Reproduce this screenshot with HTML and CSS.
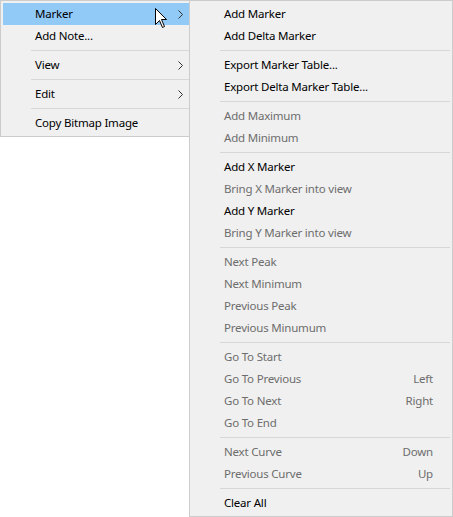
FILE: index.html
```html
<!DOCTYPE html>
<html>
<head>
<meta charset="utf-8">
<link rel="stylesheet" href="styles.css">
</head>
<body>
<div class="stage">
  <div class="menu main">
    <div class="item active"><span class="label">Marker</span><svg class="chev" width="5" height="9" viewBox="0 0 5 9"><polyline points="0.5,0.5 4.5,4.5 0.5,8.5" fill="none" stroke="#333" stroke-width="1"/></svg></div>
    <div class="item"><span class="label">Add Note...</span></div>
    <div class="sep"></div>
    <div class="item"><span class="label">View</span><svg class="chev" width="5" height="9" viewBox="0 0 5 9"><polyline points="0.5,0.5 4.5,4.5 0.5,8.5" fill="none" stroke="#333" stroke-width="1"/></svg></div>
    <div class="sep"></div>
    <div class="item"><span class="label">Edit</span><svg class="chev" width="5" height="9" viewBox="0 0 5 9"><polyline points="0.5,0.5 4.5,4.5 0.5,8.5" fill="none" stroke="#333" stroke-width="1"/></svg></div>
    <div class="sep"></div>
    <div class="item"><span class="label">Copy Bitmap Image</span></div>
  </div>
  <div class="menu sub">
    <div class="item"><span class="label">Add Marker</span></div>
    <div class="item"><span class="label">Add Delta Marker</span></div>
    <div class="sep"></div>
    <div class="item"><span class="label">Export Marker Table...</span></div>
    <div class="item"><span class="label">Export Delta Marker Table...</span></div>
    <div class="sep"></div>
    <div class="item disabled"><span class="label">Add Maximum</span></div>
    <div class="item disabled"><span class="label">Add Minimum</span></div>
    <div class="sep"></div>
    <div class="item"><span class="label">Add X Marker</span></div>
    <div class="item disabled"><span class="label">Bring X Marker into view</span></div>
    <div class="item"><span class="label">Add Y Marker</span></div>
    <div class="item disabled"><span class="label">Bring Y Marker into view</span></div>
    <div class="sep"></div>
    <div class="item disabled"><span class="label">Next Peak</span></div>
    <div class="item disabled"><span class="label">Next Minimum</span></div>
    <div class="item disabled"><span class="label">Previous Peak</span></div>
    <div class="item disabled"><span class="label">Previous Minumum</span></div>
    <div class="sep"></div>
    <div class="item disabled"><span class="label">Go To Start</span></div>
    <div class="item disabled"><span class="label">Go To Previous</span><span class="key">Left</span></div>
    <div class="item disabled"><span class="label">Go To Next</span><span class="key">Right</span></div>
    <div class="item disabled"><span class="label">Go To End</span></div>
    <div class="sep"></div>
    <div class="item disabled"><span class="label">Next Curve</span><span class="key">Down</span></div>
    <div class="item disabled"><span class="label">Previous Curve</span><span class="key">Up</span></div>
    <div class="sep"></div>
    <div class="item"><span class="label">Clear All</span></div>
  </div>
  <svg class="cursor" width="13" height="21" viewBox="0 0 13 21">
    <path d="M0.5,0.5 L0.5,16.5 L4.5,12.5 L7.5,19.5 L9.5,18.5 L6.5,11.5 L11.5,11.5 Z" fill="#fff" stroke="#000" stroke-width="1" stroke-linejoin="miter"/>
  </svg>
</div>
</body>
</html>
```
FILE: styles.css
```css
html, body {
  margin: 0;
  padding: 0;
  background: #ffffff;
}
.stage {
  position: relative;
  width: 453px;
  height: 517px;
  display: flex;
  align-items: flex-start;
  font-family: "Noto Sans", "Open Sans", sans-serif;
  font-size: 11.5px;
  letter-spacing: -0.2px;
  color: #000;
}
.menu {
  box-sizing: border-box;
  background: #f0f0f0;
  border: 1px solid #cccccc;
  padding: 2px;
  display: flex;
  flex-direction: column;
}
.main {
  width: 192px;
}
.sub {
  width: 264px;
  margin-left: -3px;
  position: relative;
  z-index: 1;
}
.item {
  box-sizing: border-box;
  height: 22px;
  display: flex;
  align-items: center;
  padding: 0 17px 1px 32px;
}
.main .item {
  padding-right: 6px;
}
.item .label {
  flex: 1;
  white-space: nowrap;
}
.item.active {
  background: #91c9f7;
}
.item.disabled {
  color: #6d6d6d;
}
.key {
  white-space: nowrap;
}
.chev {
  display: block;
  margin-top: 1px;
}
.sep {
  height: 1px;
  background: #d7d7d7;
  margin: 3px 0 3px 28px;
}
.cursor {
  position: absolute;
  left: 155px;
  top: 8px;
  z-index: 2;
}
```
